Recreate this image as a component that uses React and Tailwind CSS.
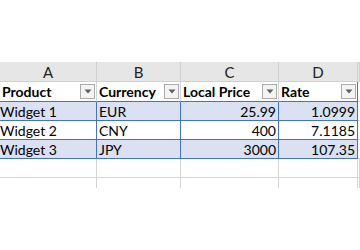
const cols = 'grid grid-cols-[97px_84px_98px_79px_1fr]'

const headers = ['Product', 'Currency', 'Local Price', 'Rate']

const rows = [
  ['Widget 1', 'EUR', '25.99', '1.0999'],
  ['Widget 2', 'CNY', '400', '7.1185'],
  ['Widget 3', 'JPY', '3000', '107.35'],
]

function FilterButton() {
  return (
    <div className="mr-[1px] flex h-[15px] w-[15px] shrink-0 items-center justify-center border border-[#ababab] bg-[#f4f4f4]">
      <svg width="8" height="5" viewBox="0 0 8 5">
        <path d="M0.5 0.5 L7.5 0.5 L4 4.5 Z" fill="#5f5f5f" />
      </svg>
    </div>
  )
}

export default function App() {
  return (
    <div className="h-[250px] w-[360px] overflow-hidden bg-white font-['Lato','Liberation_Sans',sans-serif] text-[14px] leading-none text-black">
      <div className="h-[62px]" />

      {/* column letters */}
      <div className={`${cols} h-[20px] border-b border-[#d0d0d0] bg-[#e6e6e6] text-[15px] text-[#222]`}>
        {['A', 'B', 'C', 'D', ''].map((l, i) => (
          <div key={i} className="flex items-center justify-center border-r border-[#d0d0d0] pt-[1px]">
            {l}
          </div>
        ))}
      </div>

      {/* table header */}
      <div className={`${cols} h-[20px]`}>
        {headers.map((h, i) => (
          <div
            key={h}
            className={`flex items-center justify-between border-b border-[#4472c4] pl-[2px] font-bold ${i === 3 ? 'border-r border-r-[#4472c4]' : 'border-r border-r-[#d4d4d4]'}`}
          >
            <span className="pt-[1px]">{h}</span>
            <FilterButton />
          </div>
        ))}
        <div className="border-b border-[#d4d4d4]" />
      </div>

      {/* table rows */}
      {rows.map((r, ri) => (
        <div key={ri} className={`${cols} h-[19px]`}>
          {r.map((v, i) => (
            <div
              key={i}
              className={`flex items-center border-b border-r border-[#4472c4] pt-[2px] ${ri % 2 === 0 ? 'bg-[#d9e1f2]' : 'bg-white'} ${i >= 2 ? 'justify-end pr-[2px]' : i === 0 ? 'pl-0' : 'pl-[2px]'}`}
            >
              {v}
            </div>
          ))}
          <div className="border-b border-[#d4d4d4]" />
        </div>
      ))}

      {/* empty rows */}
      <div className={`${cols} h-[19px]`}>
        {[0, 1, 2, 3, 4].map((i) => (
          <div key={i} className="border-b border-r border-[#d4d4d4]" />
        ))}
      </div>
      <div className={`${cols} h-[10px]`}>
        {[0, 1, 2, 3, 4].map((i) => (
          <div key={i} className="border-r border-[#d4d4d4]" />
        ))}
      </div>
    </div>
  )
}
